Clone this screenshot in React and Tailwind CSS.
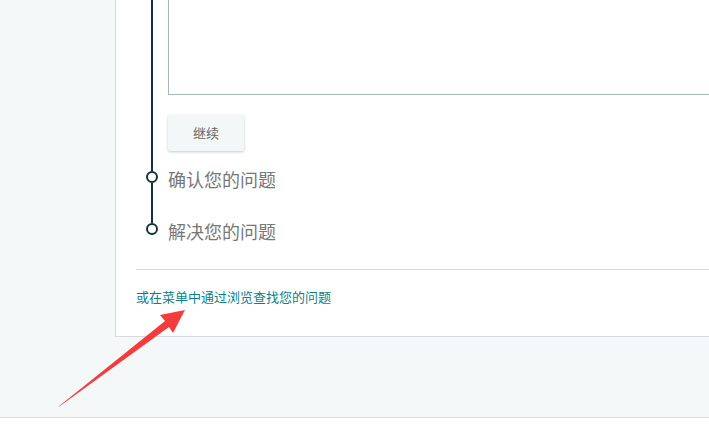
import React from 'react';

const font = { fontFamily: '"Noto Sans CJK SC", "Noto Sans", sans-serif' };

const Dot = () => (
  <div className="w-[12px] h-[12px] rounded-full border-2 border-[#14323d] bg-white shrink-0" />
);

const Step = ({ label, last }) => (
  <div className="grid grid-cols-[32px_1fr] h-[52px]">
    <div className="flex flex-col items-center">
      <div className="w-[2px] h-[20px] bg-[#14323d]" />
      <Dot />
      {!last && <div className="w-[2px] flex-1 bg-[#14323d]" />}
    </div>
    <div className="flex items-center text-[18px] text-[#777] pt-[4px]">{label}</div>
  </div>
);

export default function App() {
  return (
    <div className="relative w-[709px] h-[444px] overflow-hidden bg-white" style={font}>
      <div className="h-[418px] bg-[#f4f8f9] border-b border-[#dcdfe0] pl-[115px]">
        <div className="w-[640px] bg-white border-l border-b border-[#d5dcdf] pl-[20px] pb-[29px]">
          {/* current step */}
          <div className="grid grid-cols-[32px_1fr]">
            <div className="flex justify-center">
              <div className="w-[2px] bg-[#14323d]" />
            </div>
            <div>
              <div className="-mt-[10px] h-[105px] border border-[#a5b7ba] bg-white" />
              <button className="mt-[20px] w-[76px] h-[36px] bg-[#f4f7f8] text-[13px] text-[#666] rounded-[2px] shadow-[0_1px_3px_rgba(0,0,0,0.22)]">
                继续
              </button>
            </div>
          </div>
          <Step label="确认您的问题" />
          <Step label="解决您的问题" last />
          <div className="mt-[14px] border-t border-[#d9dcdd]" />
          <a className="block mt-[17px] text-[13px] leading-[20px] text-[#0a7f8c]">
            或在菜单中通过浏览查找您的问题
          </a>
        </div>
      </div>
      <svg className="absolute left-0 top-0 pointer-events-none" width="709" height="444">
        <polygon
          points="58,407 60,406 169,327 173,333 185,310 160,315 165,321"
          fill="#f43c3c"
        />
      </svg>
    </div>
  );
}
